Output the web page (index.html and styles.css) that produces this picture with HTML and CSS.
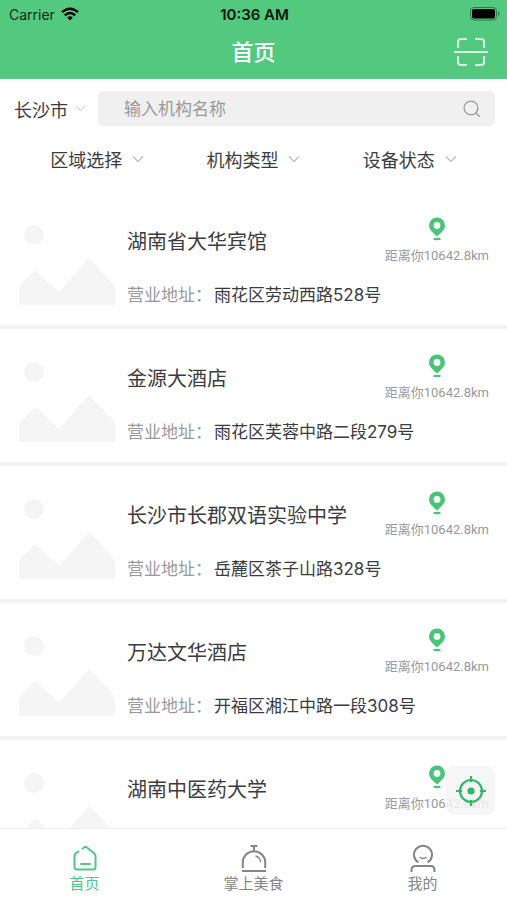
FILE: index.html
```
<!DOCTYPE html>
<html lang="zh-CN">
<head>
<meta charset="utf-8">
<meta name="viewport" content="width=device-width, initial-scale=1">
<title>首页</title>
<link rel="stylesheet" href="styles.css">
</head>
<body>
<svg class="symbols" aria-hidden="true">
  <symbol id="chevron" viewBox="0 0 12 8"><path d="M1 1.5 6 6.5 11 1.5" fill="none" stroke="currentColor" stroke-width="1.2"/></symbol>
  <symbol id="photo" viewBox="0 0 96 80"><circle cx="15" cy="10" r="10"/><path d="M0 80V64Q0 61 2 59L16 45 40 67 70 33 93 57Q96 60 96 64V80Z"/></symbol>
  <symbol id="pin" viewBox="0 0 18 24"><path fill-rule="evenodd" d="M9 0.500a8 8 0 0 1 8 8C17 13 12 16.500 9 19.500 6 16.500 1 13 1 8.500a8 8 0 0 1 8-8Zm0 4.500a3.400 3.400 0 1 0 0 6.800A3.400 3.400 0 0 0 9 5Z"/><ellipse cx="9" cy="22" rx="3.800" ry="1.200"/></symbol>
</svg>
<header class="header">
  <div class="status">
    <div class="carrier">Carrier
      <svg width="18" height="14" viewBox="0 0 18 14"><g fill="none" stroke="#000" stroke-width="2.400"><path d="M1 5.200Q9-1.800 17 5.200"/><path d="M3.800 8.300Q9 3.600 14.200 8.300"/></g><path d="M6.200 10.500Q9 8.200 11.800 10.500L9 13.500Z"/></svg>
    </div>
    <time class="clock">10:36 AM</time>
    <svg class="battery" width="30" height="14" viewBox="0 0 30 14"><rect x=".5" y=".5" width="26" height="12.500" rx="3.500" fill="none" stroke="#2f7a4b"/><rect x="2" y="2" width="23" height="9.500" rx="1.800"/><path d="M28 4.500q3 2.200 0 4.500Z" fill="#2f7a4b"/></svg>
  </div>
  <div class="titlebar">
    <h1>首页</h1>
    <button class="scan" type="button" aria-label="扫一扫"><svg width="34" height="28" viewBox="0 0 34 28"><g fill="none" stroke="#d9ffe5" stroke-width="2"><path d="M4 10V4q0-3 3-3h6M21 1h6q3 0 3 3v6M4 18v6q0 3 3 3h6M21 27h6q3 0 3-3v-6M0 14h34"/></g></svg></button>
  </div>
</header>
<form class="search">
  <button class="city" type="button">长沙市<svg width="9" height="7"><use href="#chevron"/></svg></button>
  <label class="field">
    <input type="text" placeholder="输入机构名称" aria-label="输入机构名称">
    <svg width="18" height="18" viewBox="0 0 18 18" fill="none" stroke="#999" stroke-width="1.300"><circle cx="8" cy="8" r="6.900"/><path d="m12.800 12.800 4 4"/></svg>
  </label>
</form>
<nav class="filters">
  <button type="button">区域选择<svg width="12" height="8"><use href="#chevron"/></svg></button>
  <button type="button">机构类型<svg width="12" height="8"><use href="#chevron"/></svg></button>
  <button type="button">设备状态<svg width="12" height="8"><use href="#chevron"/></svg></button>
</nav>
<main class="content">
  <ul class="list">
    <li class="item"><svg class="photo"><use href="#photo"/></svg><div class="info"><h2>湖南省大华宾馆</h2><p><span>营业地址：</span>雨花区劳动西路528号</p></div><div class="distance"><svg><use href="#pin"/></svg>距离你10642.8km</div></li>
    <li class="item"><svg class="photo"><use href="#photo"/></svg><div class="info"><h2>金源大酒店</h2><p><span>营业地址：</span>雨花区芙蓉中路二段279号</p></div><div class="distance"><svg><use href="#pin"/></svg>距离你10642.8km</div></li>
    <li class="item"><svg class="photo"><use href="#photo"/></svg><div class="info"><h2>长沙市长郡双语实验中学</h2><p><span>营业地址：</span>岳麓区茶子山路328号</p></div><div class="distance"><svg><use href="#pin"/></svg>距离你10642.8km</div></li>
    <li class="item"><svg class="photo"><use href="#photo"/></svg><div class="info"><h2>万达文华酒店</h2><p><span>营业地址：</span>开福区湘江中路一段308号</p></div><div class="distance"><svg><use href="#pin"/></svg>距离你10642.8km</div></li>
    <li class="item"><svg class="photo"><use href="#photo"/></svg><div class="info"><h2>湖南中医药大学</h2></div><div class="distance"><svg><use href="#pin"/></svg>距离你10642.8km</div></li>
  </ul>
  <button class="locate" type="button" aria-label="定位"><svg width="30" height="30" viewBox="0 0 30 30"><circle cx="15" cy="15" r="11" fill="none" stroke="#2dba65" stroke-width="2.200"/><circle cx="15" cy="15" r="3.600" fill="#2dba65"/><path d="M15 0v6M15 24v6M0 15h6M24 15h6" stroke="#2dba65" stroke-width="2.200"/></svg></button>
</main>
<nav class="tabs">
  <a class="active" href="#home"><svg width="28" height="28" viewBox="0 0 28 28" fill="none" stroke="currentColor" stroke-width="2" stroke-linecap="round" stroke-linejoin="round"><path d="M7.500 7.500 4.500 9.600Q3.500 10.500 3.500 12v11q0 2.500 2.500 2.500h16q2.500 0 2.500-2.500V12q0-1.500-1.200-2.500L16 3.500Q14.500 2.300 13 3.500l-1.500 1.200M10 20h9"/></svg>首页</a>
  <a href="#food"><svg width="28" height="28" viewBox="0 0 28 28" fill="none" stroke="currentColor" stroke-width="2"><path d="M10.500 2h7M14 2v5M2.800 24V18.500a11.200 11.200 0 0 1 22.400 0V24M2 27h24"/><path d="M15.500 12q4.500 1 5 6" stroke-width="1.400"/></svg>掌上美食</a>
  <a href="#me"><svg width="28" height="28" viewBox="0 0 28 28" fill="none" stroke="currentColor" stroke-width="2"><path d="M9.500 18.500a9 9 0 1 1 9 0M2.500 28v-2q0-4 4-4h15q4 0 4 4v2"/><path d="M10.500 13q3.500 3 7 0" stroke-width="1.300"/></svg>我的</a>
</nav>
</body>
</html>
```

FILE: styles.css
```
* { box-sizing: border-box; }

body {
  margin: 0;
  height: 100vh;
  display: flex;
  flex-direction: column;
  background: #fff;
  color: #3c3c40;
  font-family: Inter, "Noto Sans CJK SC", sans-serif;
}

button {
  border: 0;
  padding: 0;
  background: none;
  color: inherit;
  font: inherit;
}

svg { display: block; flex: none; }
.symbols { position: absolute; width: 0; height: 0; }

.header { background: #53c97f; padding-bottom: 3px; }

.status {
  display: grid;
  grid-template-columns: 1fr auto 1fr;
  align-items: center;
  height: 28px;
  padding: 0 7px 0 9px;
  font-size: 14px;
  color: #0b2a18;
}
.carrier { display: flex; align-items: center; gap: 6px; }
.clock { font-size: 15px; font-weight: 600; color: #06150c; }
.battery { justify-self: end; }

.titlebar {
  display: grid;
  grid-template-columns: 1fr auto 1fr;
  align-items: center;
  height: 48px;
  padding: 0 19px;
}
.titlebar h1 {
  grid-column: 2;
  margin: 0;
  font-size: 22px;
  line-height: 32px;
  font-weight: 500;
  color: #fff;
}
.scan { justify-self: end; }

.search {
  display: flex;
  align-items: center;
  gap: 13px;
  padding: 12px 12px 0 14px;
}
.city {
  display: flex;
  align-items: center;
  gap: 8px;
  font-size: 18px;
}
.city svg, .filters svg { color: #bbb; }
.field {
  flex: 1;
  display: flex;
  align-items: center;
  height: 35px;
  padding: 0 14px 0 26px;
  border-radius: 5px;
  background: #f0f0f0;
}
.field input {
  flex: 1;
  min-width: 0;
  border: 0;
  padding: 0;
  outline: 0;
  background: none;
  font: inherit;
  font-size: 17px;
}
.field input::placeholder { color: #999; }

.filters {
  display: grid;
  grid-template-columns: repeat(3, 1fr);
  padding: 0 19px;
  height: 66px;
}
.filters button {
  display: flex;
  justify-content: center;
  align-items: center;
  gap: 10px;
  font-size: 18px;
}

.content { position: relative; flex: 1; min-height: 0; overflow: hidden; }
.list { margin: 0; padding: 0; list-style: none; }
.item {
  display: flex;
  gap: 12px;
  height: 137px;
  padding: 25px 18px 0 19px;
  border-bottom: 4px solid #f3f3f3;
}
.photo { width: 96px; height: 80px; margin-top: 8px; fill: #f5f5f5; }
.info { flex: 1; min-width: 0; padding-top: 9px; }
.info h2 {
  margin: 0 0 25px;
  font-size: 20px;
  line-height: 32px;
  font-weight: 400;
}
.info p { margin: 0; font-size: 17px; line-height: 24px; white-space: nowrap; }
.info span { margin-right: 2px; color: #999; }
.distance {
  display: flex;
  flex-direction: column;
  align-items: center;
  gap: 6px;
  font-family: Roboto, "Noto Sans CJK SC", sans-serif;
  font-size: 13px;
  line-height: 18px;
  color: #999;
}
.distance svg { width: 18px; height: 24px; fill: #49c478; }

.locate {
  position: absolute;
  right: 12px;
  bottom: 13px;
  width: 49px;
  height: 49px;
  display: grid;
  place-items: center;
  border-radius: 8px;
  background: rgba(245, 245, 245, 0.85);
}

.tabs {
  display: grid;
  grid-template-columns: repeat(3, 1fr);
  height: 72px;
  border-top: 1px solid #f0f0f0;
}
.tabs a {
  display: flex;
  flex-direction: column;
  align-items: center;
  gap: 1px;
  padding-top: 15px;
  font-size: 15px;
  line-height: 22px;
  color: #858585;
  text-decoration: none;
}
.tabs .active { color: #53c588; }
```
